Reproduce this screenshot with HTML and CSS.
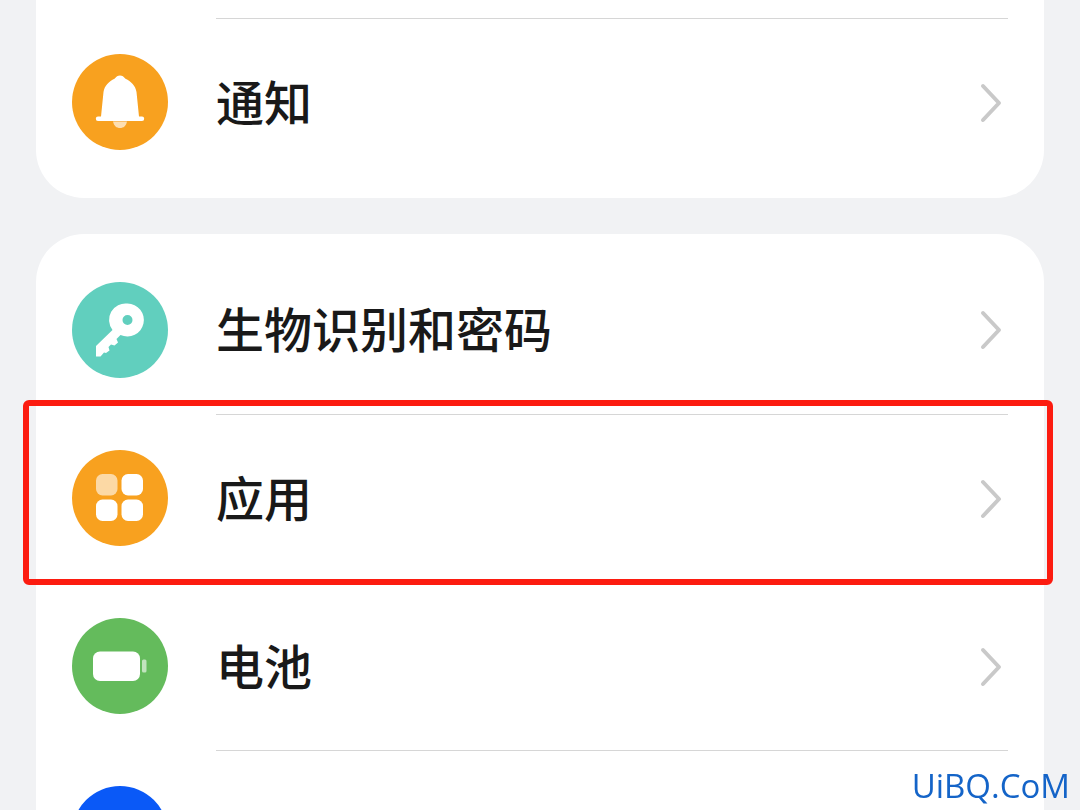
FILE: index.html
```html
<!DOCTYPE html>
<html lang="zh-CN">
<head>
<meta charset="utf-8">
<meta name="viewport" content="width=device-width, initial-scale=1">
<title>设置</title>
<link rel="stylesheet" href="styles.css">
</head>
<body>
<main class="settings">
  <nav class="card card-first">
    <a class="row" href="#notifications">
      <svg class="icon orange" viewBox="0 0 96 96" aria-hidden="true">
        <path d="M41 67.500h14c-1 4.500-3.500 6.500-7 6.500s-6-2-7-6.500z" fill="#fff" opacity=".65"/>
        <path d="M48 21.500c2.200 0 3.800 1.200 5.500 3.300 5.500 2.700 10 6.700 11 13.200L67 62.500H70a2.200 2.200 0 0 1 0 4.400H26a2.200 2.200 0 0 1 0-4.400h3L31.500 38c1-6.500 5.500-10.500 11-13.200 1.700-2.100 3.300-3.300 5.500-3.300z" fill="#fff"/>
      </svg>
      <span class="content"><span class="label">通知</span>
        <svg class="chevron" viewBox="0 0 24 42" aria-hidden="true"><path d="M4 4l16 17L4 38"/></svg></span>
    </a>
  </nav>
  <nav class="card">
    <a class="row" href="#security">
      <svg class="icon teal" viewBox="0 0 96 96" aria-hidden="true">
        <path d="M55.500 21.500a16.500 16.500 0 1 1-7 31.500L44.500 57l1.500 3.500-3.500 3-3.500-1-2.500 2.500 1 3.500-3.500 2.500-2-.5L28.500 74.500H24V64L40.500 48a16.500 16.500 0 0 1 15-26.500zM55.500 33a5 5 0 1 0 0 10 5 5 0 0 0 0-10z" fill="#fff" fill-rule="evenodd"/>
      </svg>
      <span class="content"><span class="label">生物识别和密码</span>
        <svg class="chevron" viewBox="0 0 24 42" aria-hidden="true"><path d="M4 4l16 17L4 38"/></svg></span>
    </a>
    <a class="row highlighted" href="#apps">
      <svg class="icon orange" viewBox="0 0 96 96" aria-hidden="true">
        <g fill="#fff"><rect x="24" y="24" width="21.500" height="21.500" rx="6.500" opacity=".6"/><rect x="49.500" y="24" width="21.500" height="21.500" rx="6.500"/><rect x="24" y="49.500" width="21.500" height="21.500" rx="6.500"/><rect x="49.500" y="49.500" width="21.500" height="21.500" rx="6.500"/></g>
      </svg>
      <span class="content"><span class="label">应用</span>
        <svg class="chevron" viewBox="0 0 24 42" aria-hidden="true"><path d="M4 4l16 17L4 38"/></svg></span>
    </a>
    <a class="row" href="#battery">
      <svg class="icon green" viewBox="0 0 96 96" aria-hidden="true">
        <rect x="21" y="33.500" width="47" height="29.500" rx="7" fill="#fff"/>
        <rect x="70" y="41.500" width="4.500" height="13" rx="1.500" fill="#fff" opacity=".6"/>
      </svg>
      <span class="content"><span class="label">电池</span>
        <svg class="chevron" viewBox="0 0 24 42" aria-hidden="true"><path d="M4 4l16 17L4 38"/></svg></span>
    </a>
    <div class="row">
      <svg class="icon blue" viewBox="0 0 96 96" aria-hidden="true"></svg>
      <span class="content"></span>
    </div>
  </nav>
</main>
<div class="watermark">UiBQ.CoM</div>
</body>
</html>
```
FILE: styles.css
```css
* { box-sizing: border-box; }

body {
  margin: 0;
  height: 100vh;
  overflow: hidden;
  background: #f1f2f4;
  color: #191919;
  font-family: "Noto Sans CJK SC", sans-serif;
}

.settings {
  display: flex;
  flex-direction: column;
  gap: 36px;
  padding: 0 36px;
}

.card {
  padding: 12px 0;
  border-radius: 48px;
  background: #fff;
}

.card-first {
  padding-top: 18px;
  border-radius: 0 0 48px 48px;
}

.row {
  position: relative;
  display: flex;
  align-items: center;
  gap: 48px;
  height: 168px;
  padding: 0 36px;
  color: inherit;
  text-decoration: none;
}

.icon {
  flex: none;
  width: 96px;
  height: 96px;
  border-radius: 50%;
}

.orange { background: #f8a11f; }
.teal { background: #61cfbe; }
.green { background: #64bb5c; }
.blue { background: #0a59f7; }

.content {
  flex: 1;
  display: flex;
  align-items: center;
  justify-content: space-between;
  height: 100%;
  padding-right: 5px;
}

.row + .row .content,
.card-first .content {
  border-top: 1px solid #d6d6d6;
}

.label {
  padding-bottom: 6px;
  font-size: 48px;
  font-weight: 500;
  line-height: 64px;
}

.chevron {
  width: 24px;
  height: 42px;
  fill: none;
  stroke: #c9c9c9;
  stroke-width: 4;
  stroke-linecap: round;
  stroke-linejoin: round;
}

.highlighted::after {
  content: "";
  position: absolute;
  inset: -14px -9px -3px -13px;
  z-index: 1;
  border: 6px solid #fc1c10;
  border-radius: 6px;
  pointer-events: none;
}

.watermark {
  position: fixed;
  right: 10px;
  bottom: 4px;
  color: #1464c8;
  font-family: "Open Sans", sans-serif;
  font-size: 33px;
  line-height: 40px;
}
```
